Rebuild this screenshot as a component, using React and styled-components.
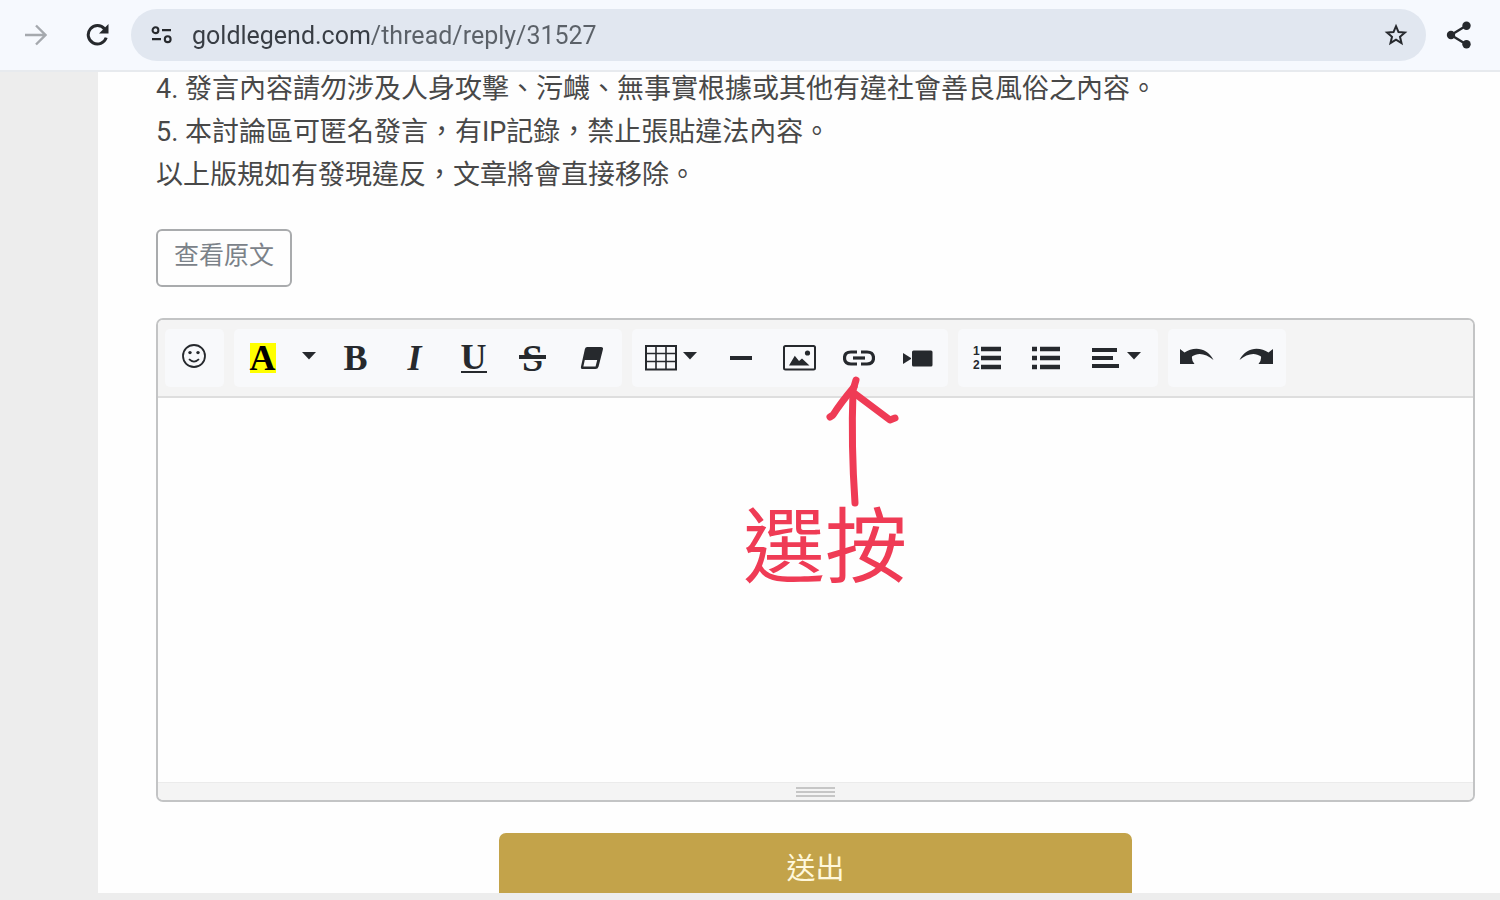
import React from "react";
import styled, { createGlobalStyle } from "styled-components";

const INK = "#26292d";
const RED = "#ef3b55";

const GlobalStyle = createGlobalStyle`
  *, *::before, *::after { box-sizing: border-box; }
  body {
    margin: 0;
    background: #ededed;
    font-family: Roboto, "Noto Sans CJK TC", sans-serif;
    color: #484848;
  }
  button, input, textarea { font: inherit; color: inherit; }
`;

const Screen = styled.div`
  display: flex;
  flex-direction: column;
  min-height: 100vh;
  padding-bottom: 7px;
`;

const BrowserBar = styled.header`
  position: relative;
  z-index: 1;
  display: flex;
  align-items: center;
  height: 72px;
  padding: 0 8px;
  background: #f6f9fe;
  border-bottom: 2px solid #e7eaee;
`;

const BarButton = styled.button`
  display: flex;
  align-items: center;
  justify-content: center;
  width: ${(p) => p.$width || 56}px;
  height: 52px;
  padding: 0;
  border: 0;
  background: none;
  color: ${(p) => p.$color || INK};
`;

const AddressBar = styled.div`
  display: flex;
  flex: 1;
  align-items: center;
  height: 52px;
  border-radius: 26px;
  background: #e1e7f0;
`;

const AddressInput = styled.input`
  flex: 1;
  min-width: 0;
  height: 40px;
  padding: 0;
  border: 0;
  outline: 0;
  font-size: 25px;
  background: linear-gradient(to right, #383d44 178px, #5b6168 178px);
  background-clip: text;
  -webkit-text-fill-color: transparent;
`;

const Sheet = styled.main`
  display: flex;
  flex: 1;
  flex-direction: column;
  margin: -4px 0 0 98px;
  padding: 0 25px 0 58px;
  background: #fefefe;
`;

const Rules = styled.div`
  font-size: 27px;
  line-height: 43px;
`;

const Rule = styled.p`
  margin: 0;
`;

const OriginalButton = styled.button`
  align-self: flex-start;
  height: 58px;
  margin: 32px 0 31px;
  padding: 0 16px 4px;
  border: 2px solid #a9abad;
  border-radius: 6px;
  background: #fefefe;
  color: #7b8289;
  font-size: 25px;
  line-height: 36px;
`;

const Editor = styled.section`
  display: flex;
  flex: 1;
  flex-direction: column;
  border: 2px solid #c3c4c5;
  border-radius: 7px;
`;

const Toolbar = styled.div`
  display: flex;
  flex-wrap: wrap;
  gap: 10px;
  padding: 9px 7px;
  border-bottom: 2px solid #dedede;
  border-radius: 5px 5px 0 0;
  background: #f4f4f4;
`;

const Group = styled.div`
  display: flex;
  border-radius: 5px;
  background: #f8f9fb;
`;

const ToolButton = styled.button`
  display: flex;
  align-items: center;
  justify-content: center;
  gap: 6px;
  width: ${(p) => p.$width || 59}px;
  height: 58px;
  padding: 0 2px 0 0;
  border: 0;
  background: none;
  color: ${INK};
`;

const Letter = styled.span`
  font-family: "Liberation Serif", serif;
  font-size: 36px;
  font-weight: 700;
  font-style: ${(p) => (p.$italic ? "italic" : "normal")};
  line-height: 30px;
`;

const Highlight = styled(Letter)`
  background: #ffff00;
  color: #000;
`;

const Underlined = styled(Letter)`
  height: 30px;
  border-bottom: 2px solid ${INK};
  line-height: 28px;
`;

const Struck = styled(Letter)`
  position: relative;
  padding: 0 3px;
  font-size: 38px;

  &::after {
    content: "";
    position: absolute;
    top: 12px;
    left: 0;
    width: 100%;
    height: 6px;
    border-bottom: 2px solid #f8f9fb;
    background: ${INK};
  }
`;

const LinkSlot = styled.div`
  position: relative;
`;

const Annotation = styled.div`
  position: absolute;
  top: 46px;
  left: -87px;
  display: flex;
  flex-direction: column;
  width: 164px;
  color: ${RED};
  font-size: 82px;
  line-height: 82px;
  white-space: nowrap;
  pointer-events: none;
`;

const WritingArea = styled.textarea`
  display: block;
  flex: 1;
  width: 100%;
  min-height: 240px;
  padding: 16px;
  border: 0;
  outline: 0;
  resize: none;
  background: #fefefe;
  font-size: 27px;
`;

const ResizeBar = styled.div`
  display: flex;
  flex-direction: column;
  align-items: center;
  justify-content: center;
  gap: 2px;
  height: 18px;
  border-top: 1px solid #ebebeb;
  border-radius: 0 0 5px 5px;
  background: #f4f4f4;
`;

const Grip = styled.span`
  width: 39px;
  height: 2px;
  background: #c6c6c6;
`;

const SubmitButton = styled.button`
  align-self: center;
  width: 48%;
  height: 60px;
  margin-top: 31px;
  padding: 12px 0 0;
  border: 0;
  border-radius: 7px 7px 0 0;
  background: #c3a34a;
  color: #fff8dc;
  font-size: 29px;
  line-height: 48px;
`;

const Svg = ({ w, h, children }) => (
  <svg width={w} height={h} viewBox={`0 0 ${w} ${h}`} fill="none" stroke="currentColor" aria-hidden="true">
    {children}
  </svg>
);

const ForwardIcon = () => (
  <Svg w={22} h={22}>
    <path d="M0 11H20M11 1.5L20.5 11L11 20.5" strokeWidth="2.4" />
  </Svg>
);

const ReloadIcon = () => (
  <Svg w={24} h={24}>
    <path d="M20.2 14.6A9.2 9.2 0 1 1 18.6 6" strokeWidth="3" />
    <path d="M22.5 1V10.5H13Z" fill="currentColor" stroke="none" />
  </Svg>
);

const SiteInfoIcon = () => (
  <Svg w={22} h={18}>
    <circle cx="4.5" cy="4.2" r="2.9" strokeWidth="2.1" />
    <path d="M11 4.2H20M1 13.2H10" strokeWidth="2.2" />
    <circle cx="16.7" cy="13.2" r="2.9" strokeWidth="2.1" />
  </Svg>
);

const StarIcon = () => (
  <Svg w={24} h={24}>
    <path
      d="M12 3.2L14.5 9.1L20.9 9.6L16 13.8L17.5 20.1L12 16.7L6.5 20.1L8 13.8L3.1 9.6L9.5 9.1Z"
      strokeWidth="2"
    />
  </Svg>
);

const ShareIcon = () => (
  <Svg w={26} h={28}>
    <path d="M20.5 4.5L5 14L20.5 23.5" strokeWidth="2.4" />
    <g fill="currentColor" stroke="none">
      <circle cx="20.5" cy="4.7" r="4.2" />
      <circle cx="5" cy="14" r="4.2" />
      <circle cx="20.5" cy="23.3" r="4.2" />
    </g>
  </Svg>
);

const SmileIcon = () => (
  <Svg w={26} h={30}>
    <circle cx="13" cy="13" r="11" strokeWidth="1.8" />
    <path d="M8 16.2Q13 21 18 16.2" strokeWidth="1.8" />
    <circle cx="9" cy="9.6" r="1.7" fill="currentColor" stroke="none" />
    <circle cx="17" cy="9.6" r="1.7" fill="currentColor" stroke="none" />
  </Svg>
);

const Caret = () => (
  <Svg w={14} h={14}>
    <path d="M0 1H14L7 8.5Z" fill="currentColor" stroke="none" />
  </Svg>
);

const EraserIcon = () => (
  <Svg w={24} h={24}>
    <path d="M7.2 1H21Q23.6 1 22.9 3.6L18.6 20.4Q17.9 23 15.4 23H3Q0.4 23 1 20.4L4.9 3Q5.4 1 7.2 1Z" fill="currentColor" stroke="none" />
    <path d="M4.8 14H17.2L15.6 20.4H3.4Z" fill="#f8f9fb" stroke="none" />
  </Svg>
);

const TableIcon = () => (
  <Svg w={32} h={26}>
    <rect x="1" y="1" width="30" height="23.5" strokeWidth="2" />
    <path d="M1 8.5H31M1 16.5H31M11 1V24M21 1V24" strokeWidth="1.6" />
  </Svg>
);

const RuleIcon = () => (
  <Svg w={22} h={4}>
    <path d="M0 2H22" strokeWidth="4" />
  </Svg>
);

const ImageIcon = () => (
  <Svg w={33} h={26}>
    <rect x="1" y="1" width="31" height="23.5" rx="1.5" strokeWidth="2" />
    <path d="M6 20.5L11.8 10.8L16 16L19 13.4L26.5 20.5Z" fill="currentColor" stroke="none" />
    <circle cx="24.5" cy="8" r="2.6" fill="currentColor" stroke="none" />
  </Svg>
);

const LinkIcon = () => (
  <Svg w={32} h={16}>
    <path d="M14 2H8Q1.5 2 1.5 8T8 14H14M18 2H24Q30.5 2 30.5 8T24 14H18" strokeWidth="3.2" />
    <path d="M10 8H22" strokeWidth="3.2" />
  </Svg>
);

const VideoIcon = () => (
  <Svg w={30} h={17}>
    <rect x="9" y="0.5" width="20.5" height="16" rx="1.5" fill="currentColor" stroke="none" />
    <path d="M0 3L8 8V9L0 14Z" fill="currentColor" stroke="none" />
  </Svg>
);

const NumberFigure = styled.text`
  fill: ${INK};
  stroke: none;
  font-family: "Liberation Sans", sans-serif;
  font-size: 12px;
  font-weight: 700;
`;

const OrderedIcon = () => (
  <Svg w={32} h={32}>
    <NumberFigure x="2" y="13">1</NumberFigure>
    <NumberFigure x="2" y="27">2</NumberFigure>
    <path d="M10 7H30M10 16H30M10 25H30" strokeWidth="4.6" />
  </Svg>
);

const BulletIcon = () => (
  <Svg w={28} h={26}>
    <path d="M0 4H5M0 13H5M0 22H5M8 4H28M8 13H28M8 22H28" strokeWidth="4.6" />
  </Svg>
);

const AlignIcon = () => (
  <Svg w={29} h={22}>
    <path d="M0 3H25M0 11H21M0 19H27" strokeWidth="3.8" />
  </Svg>
);

const undoShape = "M0 1L4.5 4.5C13-1.5 27-1.5 33.5 12C26 5.5 18 4 12 8.5Q11.5 13 14.5 16H0Z";

const UndoIcon = () => (
  <Svg w={34} h={20}>
    <path d={undoShape} fill="currentColor" stroke="none" />
  </Svg>
);

const RedoIcon = () => (
  <Svg w={34} h={20}>
    <path d={undoShape} transform="translate(34 0) scale(-1 1)" fill="currentColor" stroke="none" />
  </Svg>
);

const ArrowDrawing = () => (
  <svg width="164" height="132" viewBox="0 0 164 132" fill="none" stroke={RED} strokeWidth="7" strokeLinecap="round" strokeLinejoin="round" aria-hidden="true">
    <path d="M113 5L110 15Q108 70 112 128" />
    <path d="M111 12C101 24 95 32 90 40L87 42" />
    <path d="M111 18L147 45L152 43" />
  </svg>
);

const Tool = ({ label, width, children }) => (
  <ToolButton type="button" aria-label={label} $width={width}>
    {children}
  </ToolButton>
);

export default function App() {
  return (
    <>
      <GlobalStyle />
      <Screen>
        <BrowserBar>
          <BarButton type="button" aria-label="下一頁" $color="#a5a9ae"><ForwardIcon /></BarButton>
          <BarButton type="button" aria-label="重新載入" $width={67}><ReloadIcon /></BarButton>
          <AddressBar>
            <BarButton type="button" aria-label="網站資訊" $width={61}><SiteInfoIcon /></BarButton>
            <AddressInput aria-label="網址" defaultValue="goldlegend.com/thread/reply/31527" />
            <BarButton type="button" aria-label="加入書籤" $width={61}><StarIcon /></BarButton>
          </AddressBar>
          <BarButton type="button" aria-label="分享" $width={66}><ShareIcon /></BarButton>
        </BrowserBar>

        <Sheet>
          <Rules>
            <Rule>4. 發言內容請勿涉及人身攻擊、污衊、無事實根據或其他有違社會善良風俗之內容。</Rule>
            <Rule>5. 本討論區可匿名發言，有IP記錄，禁止張貼違法內容。</Rule>
            <Rule>以上版規如有發現違反，文章將會直接移除。</Rule>
          </Rules>

          <OriginalButton type="button">查看原文</OriginalButton>

          <Editor>
            <Toolbar role="toolbar" aria-label="編輯工具">
              <Group>
                <Tool label="表情符號"><SmileIcon /></Tool>
              </Group>
              <Group>
                <Tool label="文字色彩"><Highlight>A</Highlight></Tool>
                <Tool label="更多色彩" width={34}><Caret /></Tool>
                <Tool label="粗體"><Letter>B</Letter></Tool>
                <Tool label="斜體"><Letter $italic>I</Letter></Tool>
                <Tool label="底線"><Underlined>U</Underlined></Tool>
                <Tool label="刪除線"><Struck>S</Struck></Tool>
                <Tool label="清除格式"><EraserIcon /></Tool>
              </Group>
              <Group>
                <Tool label="表格" width={80}><TableIcon /><Caret /></Tool>
                <Tool label="水平線"><RuleIcon /></Tool>
                <Tool label="圖片"><ImageIcon /></Tool>
                <LinkSlot>
                  <Tool label="連結"><LinkIcon /></Tool>
                  <Annotation>
                    <ArrowDrawing />
                    <span>選按</span>
                  </Annotation>
                </LinkSlot>
                <Tool label="影片"><VideoIcon /></Tool>
              </Group>
              <Group>
                <Tool label="編號清單"><OrderedIcon /></Tool>
                <Tool label="項目清單"><BulletIcon /></Tool>
                <Tool label="段落對齊" width={82}><AlignIcon /><Caret /></Tool>
              </Group>
              <Group>
                <Tool label="復原"><UndoIcon /></Tool>
                <Tool label="重做"><RedoIcon /></Tool>
              </Group>
            </Toolbar>
            <WritingArea aria-label="回覆內容" />
            <ResizeBar>
              <Grip />
              <Grip />
              <Grip />
            </ResizeBar>
          </Editor>

          <SubmitButton type="button">送出</SubmitButton>
        </Sheet>
      </Screen>
    </>
  );
}
